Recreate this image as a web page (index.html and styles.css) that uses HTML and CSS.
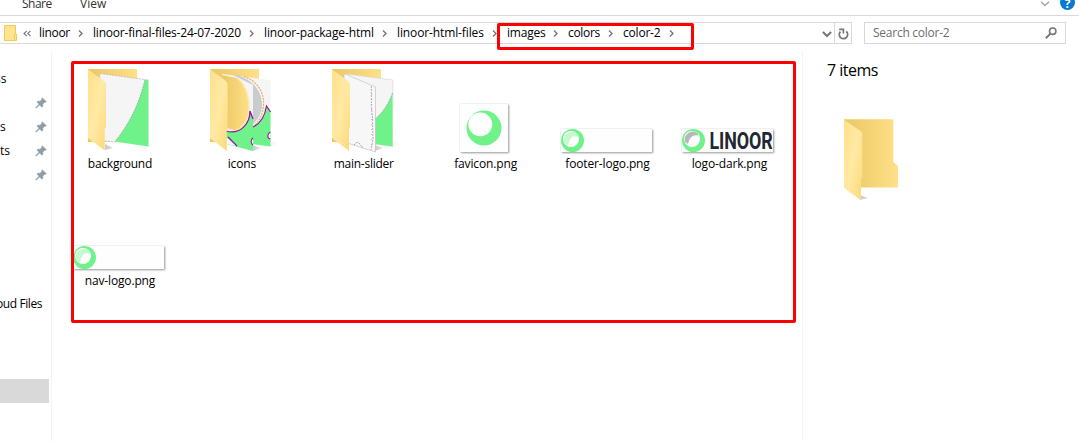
FILE: index.html
```html
<!DOCTYPE html>
<html lang="en">
<head>
<meta charset="utf-8">
<title>color-2</title>
<link rel="stylesheet" href="styles.css">
</head>
<body>
<svg class="defs" width="0" height="0">
  <defs>
    <linearGradient id="flap" x1="0" y1="0" x2="1" y2="1"><stop offset="0" stop-color="#ffe08a"/><stop offset=".5" stop-color="#ffe9a4"/><stop offset="1" stop-color="#fbd978"/></linearGradient>
    <linearGradient id="back" x1="0" y1="0" x2="1" y2="0"><stop offset="0" stop-color="#ebc763"/><stop offset="1" stop-color="#ffe088"/></linearGradient>
    <linearGradient id="shade" x1="0" y1="0" x2="1" y2="0"><stop offset="0" stop-color="#999" stop-opacity=".5"/><stop offset="1" stop-color="#ccc" stop-opacity="0"/></linearGradient>
    <symbol id="pin" viewBox="0 0 12 12"><path d="M7.2.7 11.3 4.8 10.3 5.4 9.7 5.2 7.8 7.1 7.8 9.5 6.9 10.2 4.7 8 1 11.2.5 10.8 4 7.2 1.9 5.1 2.7 4.2 5 4.3 6.9 2.3 6.6 1.6Z" fill="#8f9ba5" stroke="#8f9ba5" stroke-width=".5"/></symbol>
    <symbol id="chev" viewBox="0 0 5 7"><path d="M1 .5 4 3.5 1 6.5" fill="none" stroke="#777" stroke-width="1.4"/></symbol>
    <symbol id="ring" viewBox="0 0 24 24"><circle cx="11.5" cy="11.5" r="11.5" fill="#70f28a"/><circle cx="10" cy="10" r="8" fill="#fff"/></symbol>
  </defs>
</svg>
<div class="window">
  <div class="ribbon">
    <span class="tab share">Share</span><span class="tab">View</span>
    <svg class="collapse" width="10" height="6" viewBox="0 0 10 6"><path d="M1 .8 5 4.6 9 .8" fill="none" stroke="#a6a6a6" stroke-width="1.4"/></svg>
    <span class="help">?</span>
  </div>
  <div class="toolbar">
    <div class="address">
      <svg class="mini" width="14" height="18" viewBox="0 0 14 18"><path d="M.5 1.5H11.5V16.5H.5Z" fill="#ffe48f" stroke="#f0cc52"/><path d="M10.5 10H12.5V16.5H10.5Z" fill="#ffe48f" stroke="#f0cc52"/></svg>
      <svg class="more" width="8" height="7" viewBox="0 0 8 7"><path d="M3.8.8 1 3.5 3.8 6.2M7.5.8 4.7 3.5 7.5 6.2" fill="none" stroke="#777" stroke-width="1.1"/></svg>
      <div class="crumbs">
        <div class="crumb"><span class="c1">linoor</span><svg><use href="#chev"/></svg></div>
        <div class="crumb"><span class="c2">linoor-final-files-24-07-2020</span><svg><use href="#chev"/></svg></div>
        <div class="crumb"><span class="c3">linoor-package-html</span><svg><use href="#chev"/></svg></div>
        <div class="crumb"><span class="c4">linoor-html-files</span><svg><use href="#chev"/></svg></div>
        <div class="crumb"><span class="c5">images</span><svg><use href="#chev"/></svg></div>
        <div class="crumb"><span class="c6">colors</span><svg><use href="#chev"/></svg></div>
        <div class="crumb"><span class="c7">color-2</span><svg><use href="#chev"/></svg></div>
      </div>
      <svg class="drop" width="10" height="7" viewBox="0 0 10 7"><path d="M.9 1 5 5 9.1 1" fill="none" stroke="#777" stroke-width="2"/></svg>
      <div class="refresh"><svg width="11" height="12" viewBox="0 0 11 12"><path d="M2.4 3.6A4.2 4.2 0 1 0 8.3 3.4" fill="none" stroke="#777" stroke-width="1.7"/><path d="M1.2 1.4H5.4V5.4" fill="none" stroke="#777" stroke-width="1.7"/></svg></div>
    </div>
    <div class="search"><span>Search color-2</span><svg width="12" height="12" viewBox="0 0 12 12"><circle cx="7.7" cy="4.2" r="3.2" fill="none" stroke="#777" stroke-width="1.6"/><path d="M5.4 6.6.8 11.2" stroke="#777" stroke-width="2"/></svg></div>
  </div>
  <div class="body">
    <div class="nav">
      <div class="item"><span class="n1">ss</span></div>
      <div class="item"><svg><use href="#pin"/></svg></div>
      <div class="item"><span class="n2">s</span><svg><use href="#pin"/></svg></div>
      <div class="item"><span class="n3">ts</span><svg><use href="#pin"/></svg></div>
      <div class="item"><svg><use href="#pin"/></svg></div>
      <div class="item cloud"><span class="n4">oud Files</span></div>
      <div class="item selected"></div>
    </div>
    <div class="files">
      <div class="file"><div class="icon"><svg width="80" height="90" viewBox="80 65 80 90">
        <path d="M148 140 157 143 148 147ZM105 144 113 148 105 150Z" fill="url(#shade)"/>
        <path d="M88 69H137V142H88Z" fill="url(#back)"/>
        <path d="M100 73.5 148.5 80V146.5L103 141Z" fill="#f5f5f6"/><path d="M100 73.5 148.5 80M105 141 116 142" stroke="#b9b9b9" stroke-width=".8" stroke-dasharray="2 1"/>
        <path d="M145 79.7 148.5 80.2V146.5L115 141.6C130 123 139 104 145 79.7Z" fill="#70f28a"/><path d="M145 80C139 104 130 123 115 141.6" fill="none" stroke="#999" stroke-width=".7" stroke-dasharray="2 1"/>
        <path d="M88 69.2 104 81Q106 82.5 106 85V127L104.7 129V150.6L88 138Z" fill="url(#flap)"/></svg></div><span class="f1">background</span></div>
      <div class="file"><div class="icon"><svg width="80" height="90" viewBox="202 65 80 90">
        <path d="M270 140 279 143 270 147ZM253 145 261 148 253 151Z" fill="url(#shade)"/>
        <path d="M210 69H259V142H210Z" fill="url(#back)"/>
        <path d="M222 74 270.8 80 270.2 146.5 253 144Z" fill="#f5f5f6"/>
        <path d="M238 75.5C253 80 263 92 262 107Q260 119 253 124V85L233 75Z" fill="#c7cccf"/>
        <path d="M244 76.5C257 81 266 93 263 109Q261 120 254 126" fill="none" stroke="#f3a95b" stroke-width="1.2" stroke-dasharray="2 1"/>
        <path d="M253 127Q264 122 266.5 106L270.5 112V146.5L253 144Z" fill="#70f28a"/><path d="M253 127Q264 122 266.5 106L270.5 112" fill="none" stroke="#9018a0" stroke-width="1.2"/>
        <path d="M270.3 132C267 134 267 138 270.3 139" fill="#fff" stroke="#9018a0" stroke-width="1.1"/>
        <path d="M222 74 253 87V151L226 143Z" fill="#f5f5f6"/>
        <path d="M222 75 237 78C246 86 250 99 249 113Q244 129 234 130L226 128Z" fill="url(#back)"/>
        <path d="M239 79C247 87 250 98 249 114Q244 129 234 131L226 128" fill="none" stroke="#ffe9b0" stroke-width="1.3"/>
        <path d="M226 131C240 135 250 124 250 111L253 119V151L226 144Z" fill="#70f28a"/>
        <path d="M226 137 237 146 226 144Z" fill="#f5f5f6"/>
        <path d="M226 131C240 135 250 124 250 111L253 119M228 137 237 146" fill="none" stroke="#9018a0" stroke-width="1.3"/>
        <path d="M253 138C250.5 140 250.5 143 253 145" fill="#fff" stroke="#9018a0" stroke-width="1.1"/>
        <path d="M210 69.2 226 81Q227.7 82.5 227.7 85V127L226.8 129V151L210 138Z" fill="url(#flap)"/></svg></div><span class="f2">icons</span></div>
      <div class="file"><div class="icon"><svg width="80" height="90" viewBox="324 65 80 90">
        <path d="M392 140 401 143 392 147ZM375 145 383 148 375 151Z" fill="url(#shade)"/>
        <path d="M332 69H381V142H332Z" fill="url(#back)"/>
        <path d="M343 73.5 393 80 392.5 146.5 375 144Z" fill="#f5f5f6" stroke="#ccc" stroke-width=".5"/>
        <path d="M392.5 93V146.5L375 144V119C383 113 389 103 392.5 93Z" fill="#70f28a"/><path d="M392.5 93C389 103 383 113 375 119" fill="none" stroke="#999" stroke-width=".7" stroke-dasharray="2 1"/>
        <path d="M344 73.5 375.5 87V152L344 142Z" fill="#f7f7f8" stroke="#bbb" stroke-width=".6"/>
        <path d="M371.3 86V107L372.5 117 373 139 371 150" fill="none" stroke="#c09cc4" stroke-width=".9" stroke-dasharray="2 1"/><path d="M371.7 89V149" stroke="#86ae79" stroke-width=".7" stroke-dasharray="1 4"/>
        <path d="M354 145 357 142 360 144 363 148" fill="none" stroke="#a988ae" stroke-width=".8" stroke-dasharray="2 1"/>
        <path d="M332 69.2 348 81Q350 82.5 350 85V127L349 129V151L332 138Z" fill="url(#flap)"/></svg></div><span class="f3">main-slider</span></div>
      <div class="file"><div class="icon"><div class="thumb square"><svg width="36" height="36" viewBox="0 0 36 36"><circle cx="18" cy="18" r="17.5" fill="#70f28a"/><circle cx="14.3" cy="14.3" r="11.9" fill="#fff"/></svg></div></div><span class="f4">favicon.png</span></div>
      <div class="file"><div class="icon"><div class="thumb"><svg class="ring" width="24" height="24"><use href="#ring"/><path d="M3.5 14A8 8 0 0 1 15 4Q18 6 16 8Q10 5 7 16Z" fill="#c7f8d0"/></svg></div></div><span class="f5">footer-logo.png</span></div>
      <div class="file"><div class="icon"><div class="thumb"><svg class="ring" width="91" height="23" viewBox="0 0 91 23"><circle cx="11.5" cy="11.5" r="11.5" fill="#70f28a"/><circle cx="10" cy="10" r="8" fill="#fff"/><path d="M3 13A8 8 0 0 1 15 4Q17 5 16 6.5Q8 5 6 15Z" fill="#b8b8b8"/><text class="brand" x="27.5" y="20.4" textLength="63" lengthAdjust="spacingAndGlyphs">LINOOR</text></svg></div></div><span class="f6">logo-dark.png</span></div>
      <div class="file"><div class="icon"><div class="thumb"><svg class="ring" width="24" height="24"><use href="#ring"/><path d="M3.5 14A8 8 0 0 1 15 4Q18 6 16 8Q10 5 7 16Z" fill="#c7f8d0"/></svg></div></div><span class="f7">nav-logo.png</span></div>
    </div>
    <div class="details">
      <div class="count"><span>7 items</span></div>
      <svg width="66" height="84" viewBox="842 117 66 84"><path d="M897 182 906 185 897 188ZM860 195 868 198 860 200Z" fill="url(#shade)"/><path d="M844 119.3H892.5Q893.3 119.3 893.3 120V162L898 166V187Q898 187.5 897.5 187.5H844Z" fill="url(#back)"/><path d="M844 119.5 861 131.5Q862.3 132.5 862.3 134V177L861 179V200.3L844 188Z" fill="url(#flap)"/></svg>
    </div>
  </div>
  <div class="mark path-mark"></div>
  <div class="mark files-mark"></div>
</div>
</body>
</html>
```
FILE: styles.css
```css
* { box-sizing: border-box; }
body { margin: 0; background: #fff; color: #000; font: 12px/16px "Open Sans", "Noto Sans", sans-serif; }
svg { display: block; flex: none; }
.defs { position: absolute; }
span { white-space: nowrap; }
.window { position: relative; width: 1079px; height: 441px; overflow: hidden; display: flex; flex-direction: column; }
.ribbon { height: 16px; border-bottom: 1px solid #d9d9d9; display: flex; align-items: flex-start; padding-left: 22px; flex: none; }
.tab { color: #333; margin-top: -4px; width: 58px; }
.share { letter-spacing: -.5px; }
.collapse { margin: 1px 10px 0 auto; }
.help { width: 15px; height: 15px; margin: -5px 4px 0 0; border-radius: 50%; background: #0878d3; color: #fff; font-weight: 700; font-size: 12px; line-height: 17px; text-align: center; }
.toolbar { display: flex; padding-top: 6px; height: 35px; flex: none; }
.address { width: 852px; height: 22px; border: 1px solid #d9d9d9; border-left: 0; display: flex; align-items: center; }
.mini { margin: 0 5px 0 4px; }
.more { margin-right: 8px; }
.crumbs { display: grid; grid-template-columns: 54px 171px 133px 110px 61px 55px 61px; }
.crumb { display: flex; justify-content: space-between; align-items: center; padding-right: 10px; letter-spacing: -.2px; }
.crumb svg { width: 5px; height: 7px; margin-top: 1px; }
.crumb .c1, .crumb .c6 { letter-spacing: -.3px; }
.crumb .c3, .crumb .c4 { letter-spacing: -.12px; }
.drop { margin: 2px 2px 0 auto; }
.refresh { width: 17px; height: 20px; border-left: 1px solid #d9d9d9; display: flex; justify-content: center; align-items: center; padding-top: 1px; }
.search { width: 202px; height: 22px; margin-left: 12px; border: 1px solid #d9d9d9; display: flex; align-items: center; justify-content: space-between; padding: 0 8px; color: #6d6d6d; letter-spacing: -.25px; }
.body { flex: 1; display: flex; }
.nav { width: 52px; border-right: 1px solid #f3f3f3; padding-top: 16px; }
.item { height: 24px; width: 49px; display: flex; align-items: center; }
.item svg { width: 12px; height: 12px; margin-left: auto; margin-right: 2px; }
.n1 { margin-left: -5px; }
.n4 { margin-left: -4px; letter-spacing: -.4px; }
.cloud { margin-top: 104px; padding-top: 1px; }
.selected { margin-top: 64px; background: #d9d9d9; }
.files { width: 750px; padding: 14px 0 0 7px; display: grid; grid-template-columns: repeat(6, 121.9px); grid-auto-rows: 117px; align-content: start; }
.file { display: flex; flex-direction: column; align-items: center; letter-spacing: -.15px; }
.icon { height: 90px; margin-bottom: 1px; display: flex; align-items: flex-end; flex: none; }
.f1, .f3 { letter-spacing: -.25px; }
.thumb { width: 91px; height: 23px; margin: 0 3px 3px 0; background: #fefefe; box-shadow: 1px 1px 2px #999, 0 0 1px #ccc; }
.square { width: 48px; height: 48px; padding: 6px; }
.brand { font: 700 24.5px Roboto, sans-serif; fill: #222831; }
.details { flex: 1; border-left: 1px solid #f3f3f3; padding: 8px 0 0 24px; }
.count { font-size: 16px; line-height: 22px; letter-spacing: -.5px; }
.details > svg { margin: 36px 0 0 15px; }
.mark { position: absolute; border: 3px solid #f00; border-radius: 2px; }
.path-mark { left: 497px; top: 23px; width: 197px; height: 27px; }
.files-mark { left: 71px; top: 61px; width: 725px; height: 262px; }
```
